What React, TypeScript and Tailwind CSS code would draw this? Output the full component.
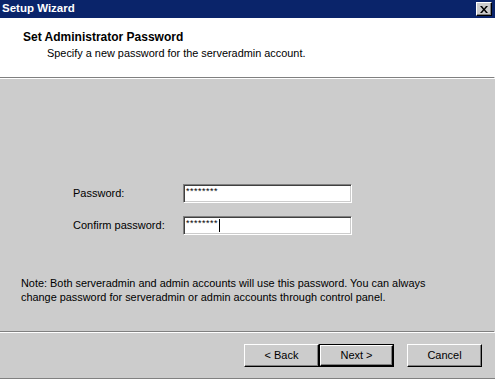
import React from 'react';

const font = { fontFamily: '"Liberation Sans", Arial, sans-serif' };

const Field = ({label, caret}: {label: string; caret?: boolean}) => {
  return (
    <div className="flex items-center h-[19px]">
      <span className="w-[110px] text-[11px] text-black leading-none">{label}</span>
      <div className="w-[169px] h-[19px] bg-white border border-t-[#808080] border-l-[#808080] border-b-white border-r-white shadow-[inset_1px_1px_0_#404040,inset_-1px_-1px_0_#cccccc] flex items-start pl-[2px] pt-[2px]">
        <span className="text-[9px] leading-[9px] tracking-[0.5px] text-black">********</span>
        {caret && <span className="w-px h-[13px] bg-black ml-px"></span>}
      </div>
    </div>
  );
};

const Btn = ({label, isDefault}: {label: string; isDefault?: boolean}) => {
  return (
    <div className={"h-[23px] w-[75px] " + (isDefault ? "border border-black" : "")}>
      <div className="h-full w-full bg-[#cccccc] border border-t-white border-l-white border-b-black border-r-black shadow-[inset_-1px_-1px_0_#808080] flex items-center justify-center text-[11px] text-black">
        {label}
      </div>
    </div>
  );
};

export default function App() {
  return (
    <div className="w-[495px] h-[379px] flex flex-col bg-[#cccccc] overflow-hidden" style={font}>
      {/* title bar */}
      <div className="h-[18px] bg-[#0a246a] flex items-center justify-between pl-[2px] pr-[3px]">
        <span className="text-white font-bold text-[11.5px] leading-none">Setup Wizard</span>
        <div className="w-[16px] h-[14px] bg-[#cccccc] border border-t-white border-l-white border-b-black border-r-black shadow-[inset_-1px_-1px_0_#808080] flex items-center justify-center">
          <svg width="8" height="7" viewBox="0 0 8 7">
            <path d="M0 0h2l2 2.5L6 0h2L5 3.5L8 7H6L4 4.5L2 7H0l3-3.5z" fill="black" />
          </svg>
        </div>
      </div>

      {/* header */}
      <div className="h-[59px] bg-white flex flex-col pt-[12px]">
        <div className="pl-[23px] text-[12px] font-bold leading-[14px] text-black">Set Administrator Password</div>
        <div className="pl-[47px] pt-[3px] text-[10.9px] leading-[13px] text-black">Specify a new password for the serveradmin account.</div>
      </div>
      <div className="h-px bg-[#808080] mr-px"></div>
      <div className="h-px bg-white"></div>

      {/* body */}
      <div className="flex-1 flex flex-col bg-[#cccccc]">
        <div className="pl-[73px] pt-[105px] flex flex-col gap-[13px]">
          <Field label="Password:" />
          <Field label="Confirm password:" caret />
        </div>
        <div className="pl-[21px] pt-[41px] text-[10.9px] leading-[14px] text-black">
          Note: Both serveradmin and admin accounts will use this password. You can always<br />
          change password for serveradmin or admin accounts through control panel.
        </div>
      </div>
      <div className="h-px bg-[#808080] mr-px"></div>
      <div className="h-px bg-white"></div>

      {/* buttons */}
      <div className="h-[46px] flex items-start pt-[11px] pl-[244px] border-b border-[#808080]">
        <Btn label="< Back" />
        <Btn label="Next >" isDefault />
        <div className="w-[13px]"></div>
        <Btn label="Cancel" />
      </div>
    </div>
  );
}
